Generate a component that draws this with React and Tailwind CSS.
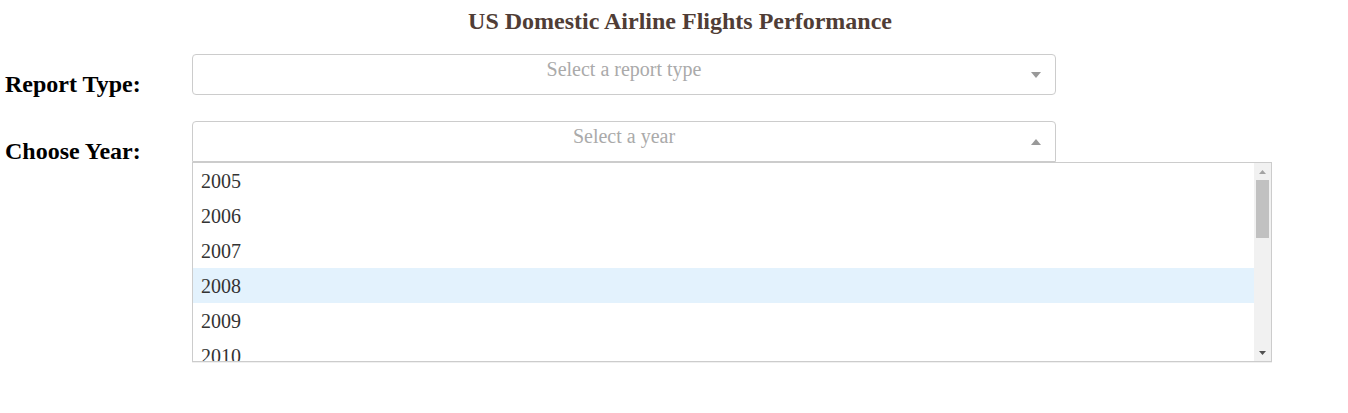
const years = ["2005", "2006", "2007", "2008", "2009", "2010"];

const Caret = ({ up = false }) => (
  <svg width="10" height="6" viewBox="0 0 10 6" className="fill-[#999]">
    {up ? <path d="M0 6 L5 0 L10 6 Z" /> : <path d="M0 0 L10 0 L5 6 Z" />}
  </svg>
);

const Dropdown = ({ placeholder, open = false, children }) => (
  <div className="relative w-[864px]">
    <div
      className={`h-[41px] border border-[#ccc] bg-white flex items-start ${
        open ? "rounded-t-[4px]" : "rounded-[4px]"
      }`}
    >
      <div className="flex-1 ml-[38px] text-center text-[20px] leading-[28px] text-[#aaa]">
        {placeholder}
      </div>
      <div className="w-[38px] h-[39px] flex items-center justify-center">
        <Caret up={open} />
      </div>
    </div>
    {children}
  </div>
);

const YearMenu = () => (
  <div className="absolute left-0 top-[41px] w-[1080px] h-[200px] border border-[#ccc] bg-white flex shadow-[0_1px_0_rgba(0,0,0,0.06)] z-10">
    <div className="flex-1 overflow-hidden">
      {years.map((y) => (
        <div
          key={y}
          className={`h-[35px] pl-[8px] flex items-center text-[20px] text-[#333] ${
            y === "2008" ? "bg-[#e3f2fd]" : ""
          }`}
        >
          {y}
        </div>
      ))}
    </div>
    <div className="w-[17px] bg-[#f1f1f1] flex flex-col items-center">
      <div className="h-[17px] flex items-center justify-center">
        <svg width="7" height="4" viewBox="0 0 7 4" className="fill-[#a3a3a3]">
          <path d="M0 4 L3.5 0 L7 4 Z" />
        </svg>
      </div>
      <div className="w-[13px] h-[58px] bg-[#c1c1c1]" />
      <div className="flex-1" />
      <div className="h-[17px] flex items-center justify-center">
        <svg width="7" height="4" viewBox="0 0 7 4" className="fill-[#505050]">
          <path d="M0 0 L7 0 L3.5 4 Z" />
        </svg>
      </div>
    </div>
  </div>
);

export default function App() {
  return (
    <div className="w-[1348px] h-[413px] bg-white font-['Liberation_Serif','Times_New_Roman',serif] text-black">
      <h1 className="text-center text-[24px] font-bold text-[#503d36] pt-[6px] leading-[30px] pl-[12px]">
        US Domestic Airline Flights Performance
      </h1>
      <div className="flex flex-col gap-[23px] mt-[18px]">
        <div className="flex items-start">
          <h2 className="w-[192px] pl-[5px] pt-[16px] text-[24px] font-bold leading-[28px]">
            Report Type:
          </h2>
          <Dropdown placeholder="Select a report type" />
        </div>
        <div className="flex items-start">
          <h2 className="w-[192px] pl-[5px] pt-[16px] text-[24px] font-bold leading-[28px]">
            Choose Year:
          </h2>
          <Dropdown placeholder="Select a year" open>
            <YearMenu />
          </Dropdown>
        </div>
      </div>
    </div>
  );
}
